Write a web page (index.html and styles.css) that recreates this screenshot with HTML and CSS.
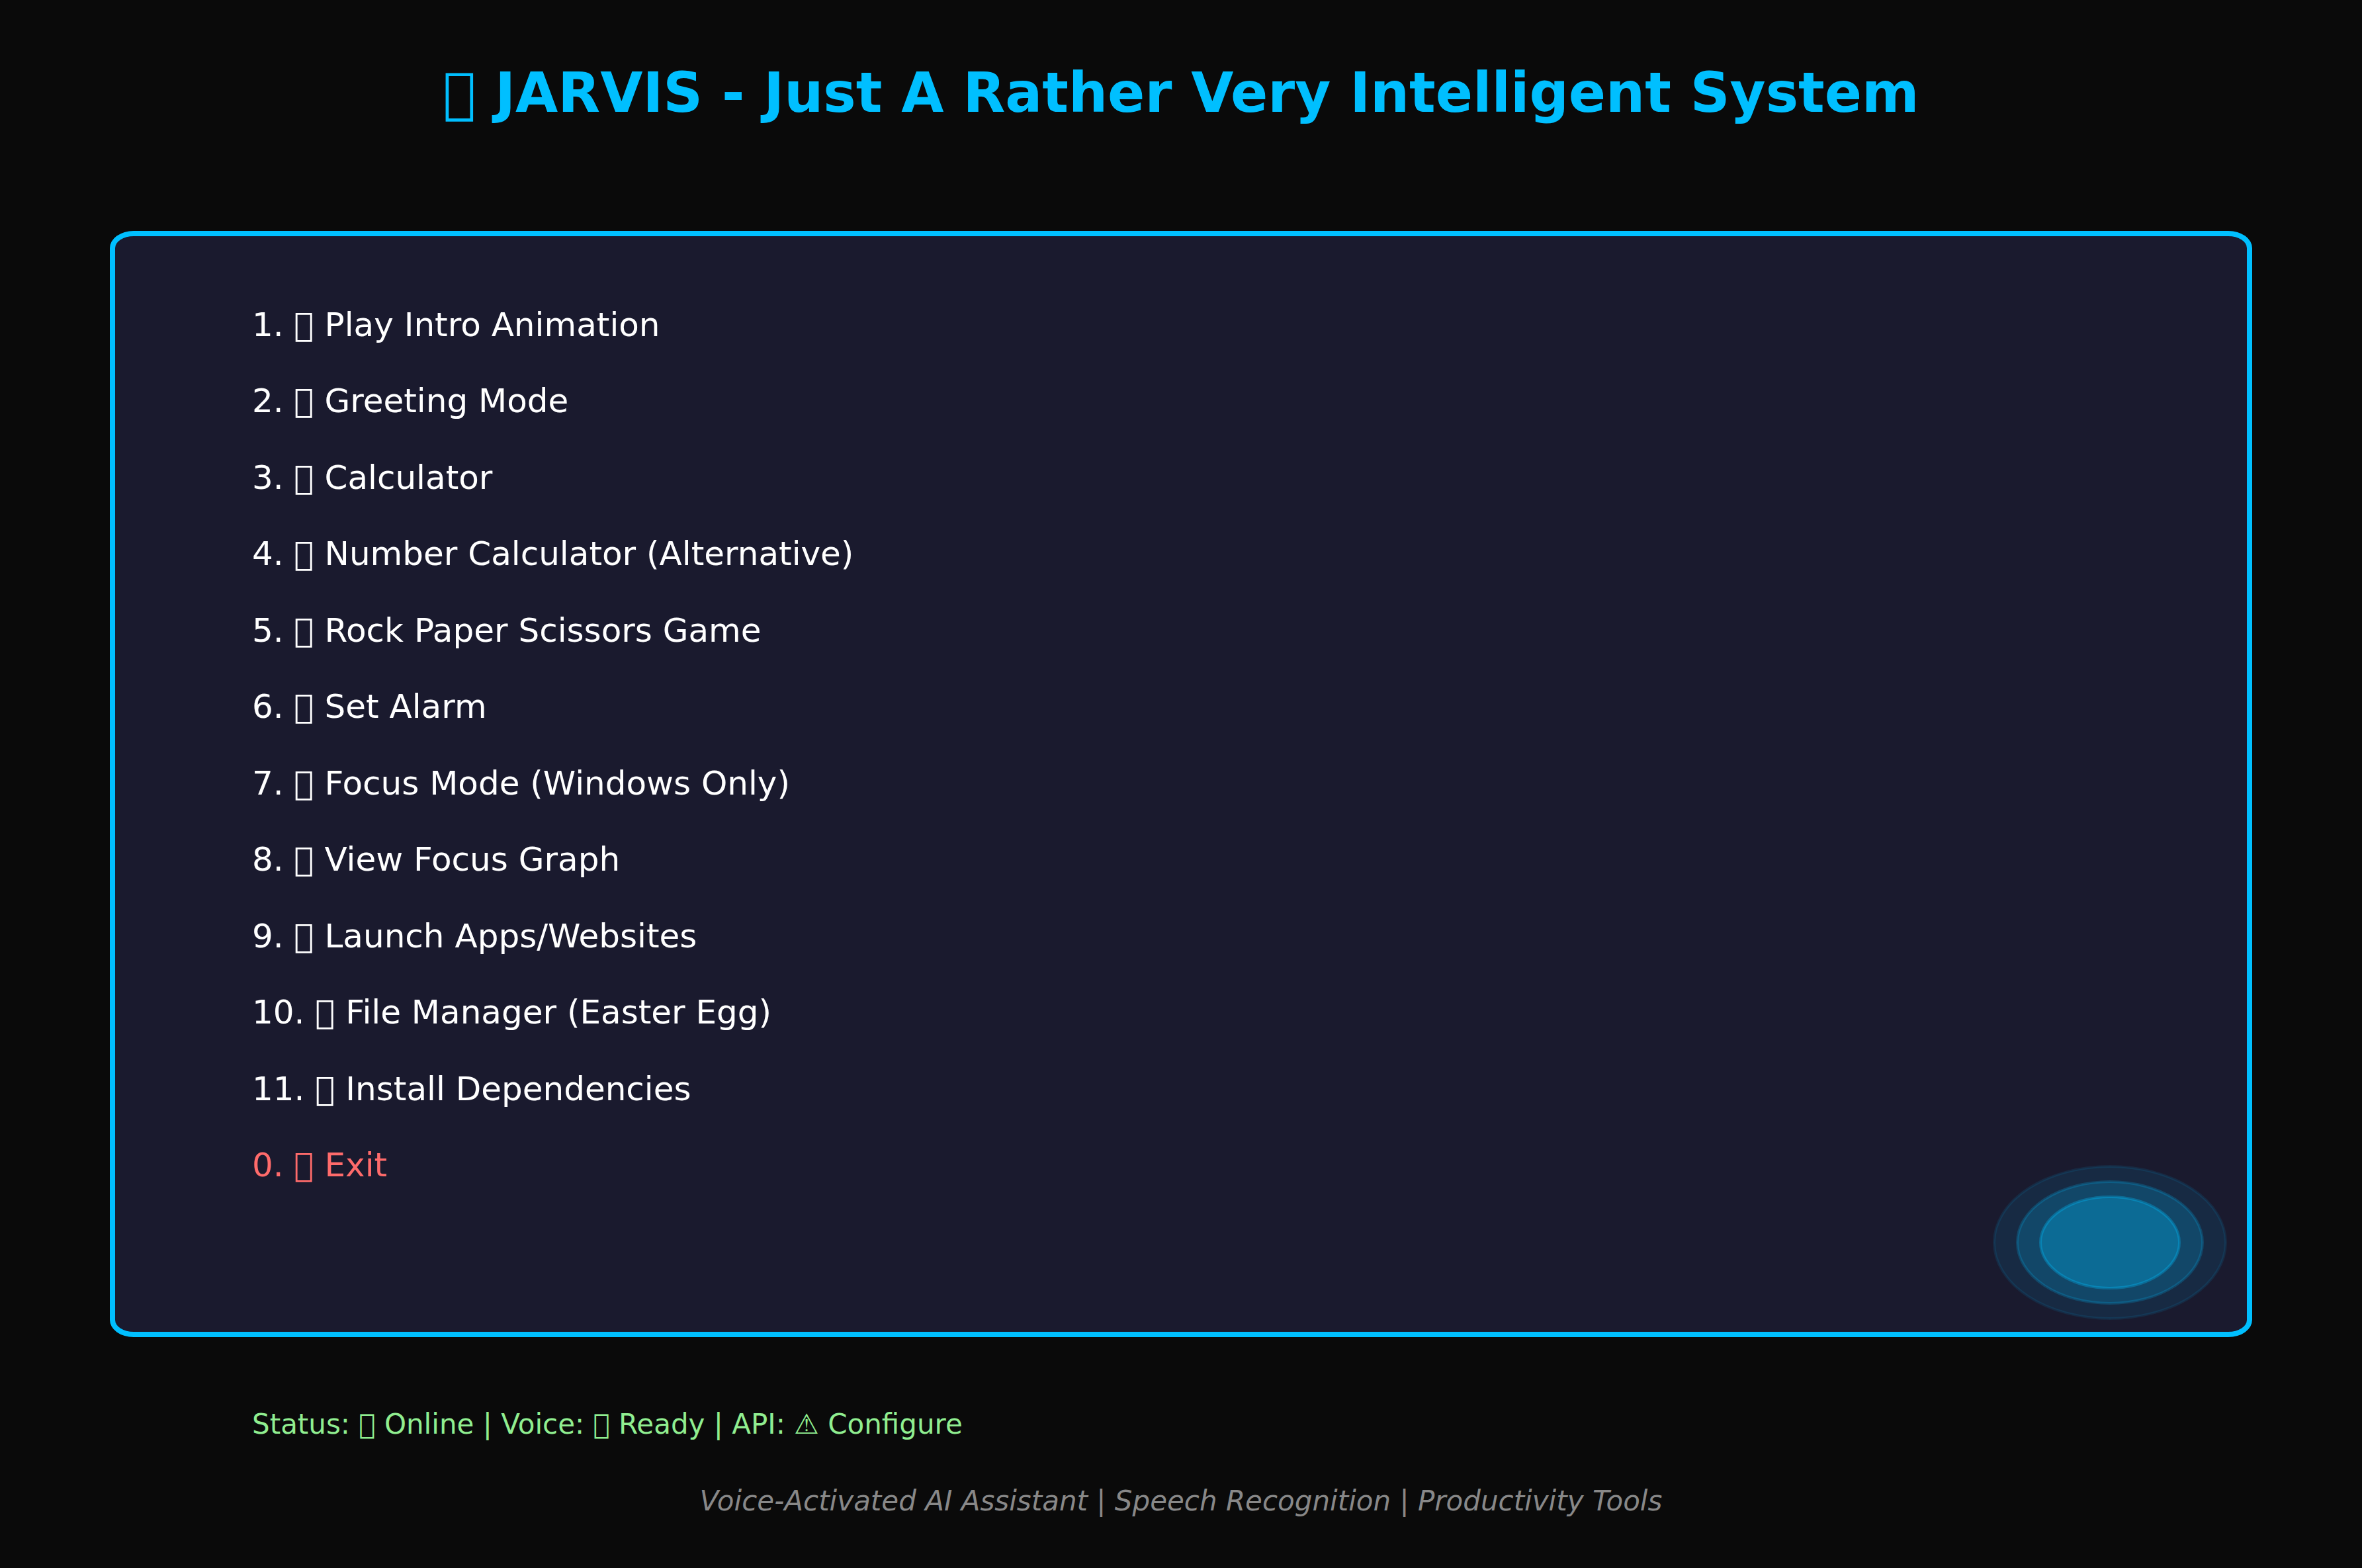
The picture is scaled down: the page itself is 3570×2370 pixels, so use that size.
FILE: index.html
```html
<!DOCTYPE html>
<html lang="en">
<head>
<meta charset="utf-8">
<title>JARVIS</title>
<meta name="viewport" content="width=device-width, initial-scale=1">
<link rel="stylesheet" href="styles.css">
</head>
<body>
<div class="page">
  <h1 class="title">&#x10FFFD; JARVIS - Just A Rather Very Intelligent System</h1>
  <main class="panel">
    <ul class="menu">
      <li>1. &#x10FFFD; Play Intro Animation</li>
      <li>2. &#x10FFFD; Greeting Mode</li>
      <li>3. &#x10FFFD; Calculator</li>
      <li>4. &#x10FFFD; Number Calculator (Alternative)</li>
      <li>5. &#x10FFFD; Rock Paper Scissors Game</li>
      <li>6. &#x10FFFD; Set Alarm</li>
      <li>7. &#x10FFFD; Focus Mode (Windows Only)</li>
      <li>8. &#x10FFFD; View Focus Graph</li>
      <li>9. &#x10FFFD; Launch Apps/Websites</li>
      <li>10. &#x10FFFD; File Manager (Easter Egg)</li>
      <li>11. &#x10FFFD; Install Dependencies</li>
      <li class="exit">0. &#x10FFFD; Exit</li>
    </ul>
    <svg class="orb" viewBox="0 0 356 236" aria-hidden="true">
      <ellipse class="halo" cx="178" cy="118" rx="175" ry="115"/>
      <ellipse class="ring" cx="178" cy="118" rx="140" ry="92"/>
      <ellipse class="core" cx="178" cy="118" rx="105" ry="69"/>
    </svg>
  </main>
  <p class="status">Status: &#x10FFFD; Online | Voice: &#x10FFFD; Ready | API: &#x26A0; Configure</p>
  <footer class="tagline">Voice-Activated AI Assistant | Speech Recognition | Productivity Tools</footer>
</div>
</body>
</html>
```
FILE: styles.css
```css
* {
  box-sizing: border-box;
}

body {
  margin: 0;
  background: #0a0a0a;
  color: #ffffff;
  font-family: "DejaVu Sans", sans-serif;
}

.page {
  display: flex;
  flex-direction: column;
  min-height: 100vh;
  padding: 91px 166px 76px;
}

.title {
  margin: 0 0 158px;
  color: #00bfff;
  font-size: 83px;
  line-height: 100px;
  font-weight: bold;
  text-align: center;
}

.panel {
  position: relative;
  padding: 76px 207px 194px;
  background: #1a1a2e;
  border: 8px solid #00bfff;
  border-radius: 36px / 26px;
}

.menu {
  display: grid;
  grid-auto-rows: 1fr;
  align-items: center;
  min-height: 1386px;
  margin: 0;
  padding: 0;
  list-style: none;
  font-size: 50px;
  line-height: 60px;
}

.exit {
  color: #ff6b6b;
}

/* Glowing assistant orb in the panel corner */
.orb {
  position: absolute;
  right: 29px;
  bottom: 17px;
  width: 356px;
  height: 236px;
  fill: #00bfff;
  stroke: #00bfff;
  stroke-width: 4px;
}

.halo {
  fill-opacity: 0.1;
  stroke-opacity: 0.1;
}

.ring {
  fill-opacity: 0.2;
  stroke-opacity: 0.2;
}

.core {
  fill-opacity: 0.3;
  stroke-opacity: 0.3;
}

.status {
  margin: 107px 0 66px;
  padding-left: 215px;
  color: #90ee90;
  font-size: 42px;
  line-height: 50px;
}

.tagline {
  color: #888888;
  font-size: 42px;
  line-height: 50px;
  font-style: italic;
  text-align: center;
}
```
